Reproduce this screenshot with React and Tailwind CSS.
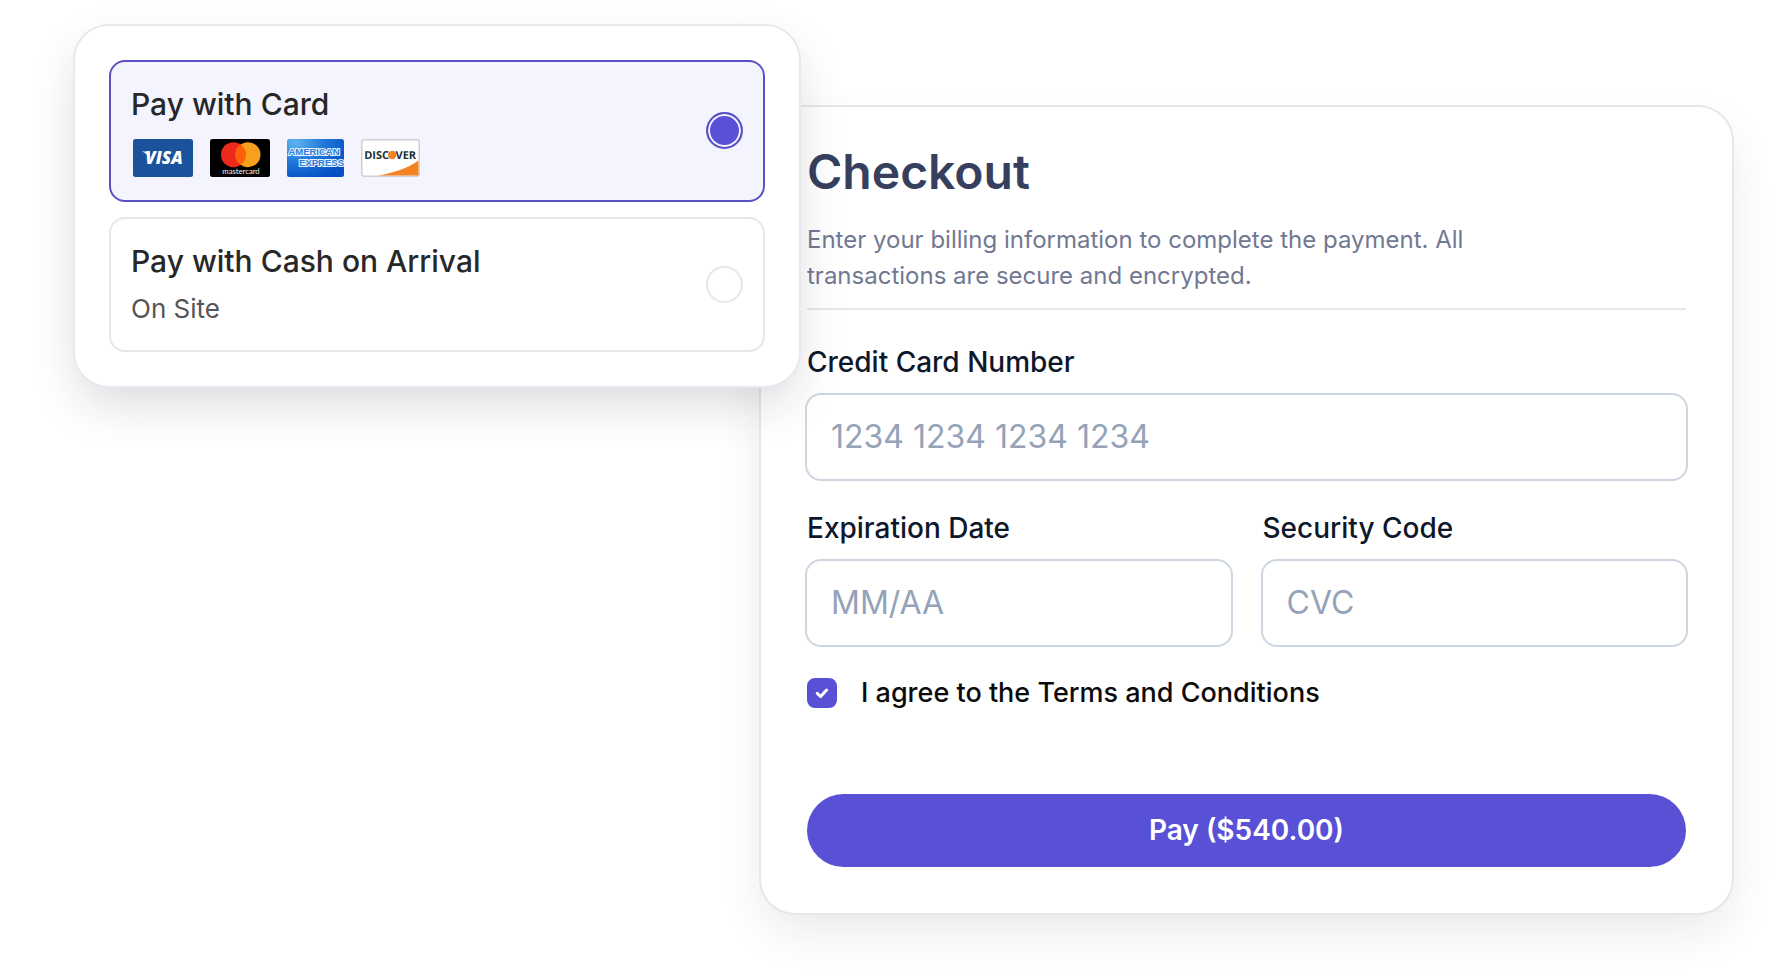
import { useState } from "react";

function VisaLogo() {
  return (
    <svg width="60" height="38" viewBox="0 0 60 38" role="img" aria-label="Visa">
      <rect width="60" height="38" rx="2.5" fill="#1a539b" />
      <path d="M9 12.4h5.2l2.2 7.4c-1-3.400-3.600-5.900-7.400-7.400z" fill="#fff" />
      <text x="31" y="24.700" textAnchor="middle" fontFamily="Open Sans, sans-serif" fontSize="17" fontWeight="800" fontStyle="italic" fill="#fff">VISA</text>
    </svg>
  );
}

function MastercardLogo() {
  return (
    <svg width="60" height="38" viewBox="0 0 60 38" role="img" aria-label="Mastercard">
      <rect width="60" height="38" rx="2.5" fill="#000" />
      <circle cx="23.500" cy="15.700" r="12.500" fill="#eb2a1c" />
      <circle cx="38" cy="15.700" r="12.500" fill="#f6a01e" />
      <path d="M30.750 5.500a12.500 12.500 0 0 1 0 20.400a12.500 12.500 0 0 1 0-20.400z" fill="#fc6008" />
      <text x="31" y="34.500" textAnchor="middle" fontFamily="Lato, sans-serif" fontSize="7.700" fill="#f2f2f2">mastercard</text>
    </svg>
  );
}

function AmexLogo() {
  return (
    <svg width="57" height="38" viewBox="0 0 57 38" role="img" aria-label="American Express">
      <defs>
        <radialGradient id="amex-blue" cx="0.15" cy="0.1" r="1">
          <stop offset="0" stopColor="#5fb4ee" />
          <stop offset="0.5" stopColor="#1f78d8" />
          <stop offset="1" stopColor="#0650c4" />
        </radialGradient>
        <clipPath id="amex-clip"><rect width="57" height="38" rx="2.5" /></clipPath>
      </defs>
      <g clipPath="url(#amex-clip)">
        <rect width="57" height="38" fill="url(#amex-blue)" />
        <g fontFamily="Liberation Sans, sans-serif" fontSize="9.500" fontWeight="700" fill="#2f7bd6" stroke="#e8f3ff" strokeWidth="2" paintOrder="stroke">
          <text x="27" y="15.800" textAnchor="middle">AMERICAN</text>
          <text x="57" y="27.300" textAnchor="end">EXPRESS</text>
        </g>
      </g>
    </svg>
  );
}

function DiscoverLogo() {
  return (
    <svg width="59" height="38" viewBox="0 0 59 38" role="img" aria-label="Discover">
      <rect x="0.750" y="0.750" width="57.500" height="36.500" rx="2.500" fill="#fff" stroke="#cfcfd2" strokeWidth="1.500" />
      <path d="M17 36.500C33 34 48 28.500 57.500 21.500V36.500z" fill="#f58220" />
      <g fontFamily="Open Sans, sans-serif" fontSize="11" fontWeight="700" fill="#1d2f38">
        <text x="28" y="20" textAnchor="end" textRendering="geometricPrecision">DISC</text>
        <text x="34.500" y="20" textRendering="geometricPrecision">VER</text>
      </g>
      <circle cx="31.200" cy="16" r="4.200" fill="#f58220" />
    </svg>
  );
}

function PaymentOption({ id, title, selected, onSelect, children }) {
  return (
    <label
      htmlFor={id}
      className={
        "flex cursor-pointer items-center justify-between rounded-2xl border-2 px-5 pt-[22px] pb-[23px] " +
        (selected ? "border-[#5951c5] bg-[#f4f4ff]" : "border-[#e6e7ec] bg-white")
      }
    >
      <span className="block">
        <span className="block text-[30px] leading-10 font-medium text-[#272727]">{title}</span>
        {children}
      </span>
      <input
        id={id}
        type="radio"
        name="payment-method"
        checked={selected}
        onChange={onSelect}
        className="size-[37px] shrink-0 appearance-none rounded-full border-2 border-[#e6e7ec] bg-white checked:border-[#5951c5] checked:bg-[#5951d5] checked:shadow-[inset_0_0_0_2px_#f4f4ff]"
      />
    </label>
  );
}

function Field({ id, label, placeholder }) {
  return (
    <div className="flex min-w-0 flex-col gap-[11px]">
      <label htmlFor={id} className="px-0.5 text-[28px] leading-10 font-medium text-[#0f172a]">{label}</label>
      <input
        id={id}
        type="text"
        placeholder={placeholder}
        className="h-[88px] w-full rounded-2xl border-2 border-[#cdd6e1] px-6 pb-0.5 text-[32px] text-[#0f172a] placeholder:text-[#94a3b8]"
      />
    </div>
  );
}

export default function App() {
  const [method, setMethod] = useState("card");
  const [agreed, setAgreed] = useState(true);

  return (
    <main className="grid min-h-screen grid-cols-[686fr_975fr] items-start bg-white pr-[37px] pb-[61px] pl-[73px] font-['Inter',sans-serif]">
      <section
        aria-label="Payment method"
        className="z-10 mt-6 -mr-[42px] flex min-w-0 flex-col gap-[15px] rounded-[36px] border-2 border-[#e8e8ef] bg-white p-[34px] shadow-[0_20px_50px_-8px_rgba(20,28,40,0.18)]"
      >
        <PaymentOption id="pay-card" title="Pay with Card" selected={method === "card"} onSelect={() => setMethod("card")}>
          <span className="mt-[15px] flex gap-[17px] pl-0.5">
            <VisaLogo />
            <MastercardLogo />
            <AmexLogo />
            <DiscoverLogo />
          </span>
        </PaymentOption>
        <PaymentOption id="pay-cash" title="Pay with Cash on Arrival" selected={method === "cash"} onSelect={() => setMethod("cash")}>
          <span className="mt-2.5 block text-[26px] leading-9 text-[#555555]">On Site</span>
        </PaymentOption>
      </section>

      <form
        onSubmit={(event) => event.preventDefault()}
        className="mt-[105px] min-w-0 rounded-[36px] border-2 border-[#e5e7eb] bg-white px-11 pt-[35px] pb-[46px] shadow-[0_20px_50px_-8px_rgba(20,28,40,0.11)]"
      >
        <header className="mx-0.5 border-b-2 border-[#e5e7eb] pb-[14px]">
          <h1 className="text-5xl leading-[60px] font-semibold text-[#363f5e]">Checkout</h1>
          <p className="mt-5 max-w-[700px] text-2xl leading-9 text-[#717891]">
            Enter your billing information to complete the payment. All transactions are secure and encrypted.
          </p>
        </header>

        <div className="mt-8 flex flex-col gap-[27px]">
          <Field id="card-number" label="Credit Card Number" placeholder="1234 1234 1234 1234" />
          <div className="grid grid-cols-2 gap-7">
            <Field id="expiration" label="Expiration Date" placeholder="MM/AA" />
            <Field id="security-code" label="Security Code" placeholder="CVC" />
          </div>
        </div>

        <div className="mx-0.5 mt-[30px] flex items-center gap-6">
          <span className="relative flex size-[30px] shrink-0">
            <input
              id="terms"
              type="checkbox"
              checked={agreed}
              onChange={() => setAgreed(!agreed)}
              className="size-full appearance-none rounded-lg border-2 border-[#cdd6e1] checked:border-[#5951d5] checked:bg-[#5951d5]"
            />
            {agreed && (
              <svg viewBox="0 0 30 30" className="pointer-events-none absolute inset-0" fill="none" stroke="#fff" strokeWidth="3" strokeLinecap="round" strokeLinejoin="round" aria-hidden="true">
                <path d="M10.200 15.300l3.400 3.200l6-6.500" />
              </svg>
            )}
          </span>
          <label htmlFor="terms" className="text-[27px] leading-8 font-medium text-[#0b0b0d]">I agree to the Terms and Conditions</label>
        </div>

        <div className="mx-0.5 mt-[85px]">
          <button type="submit" className="h-[73px] w-full rounded-full bg-[#5951d5] pb-0.5 text-[28px] font-semibold text-white">
            Pay ($540.00)
          </button>
        </div>
      </form>
    </main>
  );
}
